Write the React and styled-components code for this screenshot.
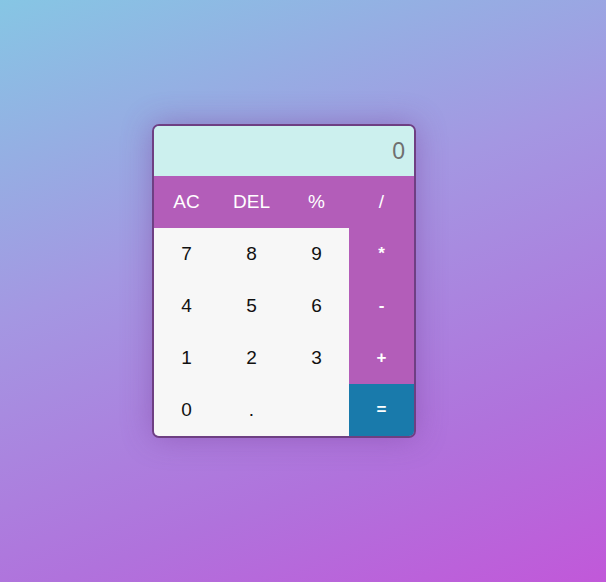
import React, { useState } from "react"
import styled, { createGlobalStyle } from "styled-components"

const GlobalStyle = createGlobalStyle`
	* {
		box-sizing: border-box;
	}
	html, body {
		margin: 0;
		padding: 0;
		height: 100%;
	}
	body {
		font-family: "Liberation Sans", Arial, sans-serif;
		background: linear-gradient(160deg, #86c6e4 0%, #a497e2 40%, #b072dc 75%, #c158d9 100%);
		background-attachment: fixed;
	}
`

const Page = styled.div`
	width: 568px;
	height: 582px;
	display: flex;
	justify-content: center;
	padding-top: 124px;
`

const Calculator = styled.div`
	width: 264px;
	height: 314px;
	border: 2px solid #6e3f83;
	border-radius: 7px;
	overflow: hidden;
	box-shadow: 0 0 30px rgba(120, 60, 150, 0.45);
	display: grid;
	grid-template-columns: repeat(4, 65px);
	grid-template-rows: 50px repeat(5, 52px);
`

const Display = styled.div`
	grid-column: 1 / -1;
	background: #ccf0ee;
	color: #6f6f6f;
	font-size: 23px;
	display: flex;
	align-items: center;
	justify-content: flex-end;
	padding-right: 9px;
`

const Key = styled.button`
	border: none;
	margin: 0;
	padding: 0;
	font-family: "Liberation Sans", Arial, sans-serif;
	font-size: ${(p) => (p.$op ? "17px" : "19px")};
	font-weight: ${(p) => (p.$op ? 700 : 400)};
	color: ${(p) => (p.$kind === "num" ? "#111" : "#fff")};
	background: ${(p) =>
		p.$kind === "num" ? "#f7f7f7" : p.$kind === "eq" ? "#197aab" : "#b35db9"};
	display: flex;
	align-items: center;
	justify-content: center;
	cursor: pointer;
`

const keys = [
	["AC", "fn"], ["DEL", "fn"], ["%", "fn"], ["/", "fn"],
	["7", "num"], ["8", "num"], ["9", "num"], ["*", "op"],
	["4", "num"], ["5", "num"], ["6", "num"], ["-", "op"],
	["1", "num"], ["2", "num"], ["3", "num"], ["+", "op"],
	["0", "num"], [".", "num"], ["", "num"], ["=", "eq"],
]

const App = () => {
	const [value] = useState("0")
	return (
		<>
			<GlobalStyle />
			<Page>
				<Calculator>
					<Display>{value}</Display>
					{keys.map(([label, kind], i) => (
						<Key
							key={i}
							$kind={kind}
							$op={kind === "op" || kind === "eq"}
						>
							{label}
						</Key>
					))}
				</Calculator>
			</Page>
		</>
	)
}

export default App
